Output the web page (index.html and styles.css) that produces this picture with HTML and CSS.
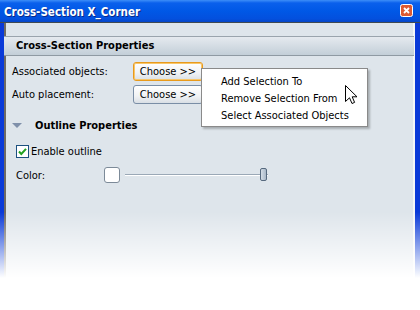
FILE: index.html
```html
<!DOCTYPE html>
<html>
<head>
    <title>Cross-Section X_Corner</title>
    <link rel="stylesheet" href="styles.css">
</head>
<body>
    <div class="window">
        <div class="titlebar">
            <span class="title">Cross-Section X_Corner</span>
            <svg class="close" width="13" height="13" viewBox="0 0 13 13">
                <rect x="0.5" y="0.5" width="12" height="12" rx="2" fill="#dd5a32" stroke="#ffffff"/>
                <path d="M4 4 L9 9 M9 4 L4 9" stroke="#ffffff" stroke-width="1.8"/>
            </svg>
        </div>
        <div class="client">
            <div class="section-head">Cross-Section Properties</div>

            <div class="row first">
                <span class="label">Associated objects:</span>
                <button class="choose focused">Choose &gt;&gt;</button>
            </div>
            <div class="row">
                <span class="label">Auto placement:</span>
                <button class="choose">Choose &gt;&gt;</button>
            </div>

            <!-- Outline group -->
            <div class="group-head">
                <span class="tri"></span>
                <span>Outline Properties</span>
            </div>
            <div class="group">
                <div class="check">
                    <svg width="13" height="13" viewBox="0 0 13 13">
                        <rect x="0.5" y="0.5" width="12" height="12" fill="#ffffff" stroke="#1c5180"/>
                        <path d="M3 6.5 L5.3 9 L10 3.8" fill="none" stroke="#21a121" stroke-width="2"/>
                    </svg>
                    <span>Enable outline</span>
                </div>
                <div class="color-row">
                    <span class="color-label">Color:</span>
                    <span class="swatch"></span>
                    <span class="slider"><span class="thumb"></span></span>
                </div>
            </div>
        </div>

        <div class="menu">
            <div class="item">Add Selection To</div>
            <div class="item">Remove Selection From</div>
            <div class="item">Select Associated Objects</div>
        </div>

        <svg class="cursor" width="13" height="20" viewBox="0 0 13 20">
            <path d="M0.5 0.5 L0.5 16.5 L4.5 12.8 L7 18.5 L9.6 17.4 L7.2 11.8 L12 11.8 Z" fill="#ffffff" stroke="#000000"/>
        </svg>

        <div class="fade"></div>
    </div>
</body>
</html>
```

FILE: styles.css
```css
body {
    margin: 0;
    background: #ffffff;
    font-family: "DejaVu Sans Condensed", "Liberation Sans", sans-serif;
    font-size: 11px;
    color: #000000;
}

.window {
    position: relative;
    width: 420px;
    height: 310px;
    display: flex;
    flex-direction: column;
    overflow: hidden;
}

.titlebar {
    height: 21px;
    display: flex;
    align-items: center;
    justify-content: space-between;
    padding: 0 7px 1px 4px;
    background: linear-gradient(#3d8ef8 0, #0a60ec 3px, #0058e6 50%, #0350de 85%, #0646c8 100%);
    border-bottom: 1px solid #404a52;
}

.title {
    color: #ffffff;
    font-weight: bold;
    font-size: 11.5px;
    padding-top: 2px;
    text-shadow: 1px 1px 0 #0a2a8a;
}

.close {
    display: block;
}

.client {
    flex: 1;
    background: #dee5eb;
    border-left: 4px solid #0a3ad8;
    border-right: 5px solid #0a3ad8;
    box-shadow: inset 2px 0 0 #6e6a64, inset -2px 0 0 #f4f6f8;
    padding-top: 13px;
}

.section-head {
    height: 18px;
    line-height: 18px;
    margin-right: 1px;
    padding-left: 12px;
    font-weight: bold;
    background: linear-gradient(#e5eaef, #c3cfd8);
    border-top: 1px solid #9aa4ad;
    border-bottom: 1px solid #8f9aa3;
}

.row {
    display: flex;
    align-items: center;
    padding-left: 8px;
    margin-top: 4px;
}

.row.first {
    margin-top: 6px;
}

.label {
    width: 121px;
}

.choose {
    width: 70px;
    height: 19px;
    padding: 0;
    font: inherit;
    color: #000000;
    background: linear-gradient(#ffffff, #f0f2f4 60%, #d9dfe5);
    border: 1px solid #7a8ea6;
    border-radius: 3px;
}

.choose.focused {
    border-color: #e89a1c;
    box-shadow: inset 0 0 0 1px #f8c66a;
}

.group-head {
    display: flex;
    align-items: center;
    height: 16px;
    margin-top: 13px;
    padding-left: 8px;
    font-weight: bold;
}

.tri {
    width: 0;
    height: 0;
    border-left: 5px solid transparent;
    border-right: 5px solid transparent;
    border-top: 5px solid #7f90aa;
    margin-right: 13px;
}

.group {
    padding-left: 12px;
    padding-top: 12px;
}

.check {
    display: flex;
    align-items: center;
    gap: 2px;
}

.check svg {
    display: block;
}

.color-row {
    display: flex;
    align-items: center;
    margin-top: 9px;
}

.color-label {
    width: 88px;
}

.swatch {
    width: 14px;
    height: 14px;
    background: #ffffff;
    border: 1px solid #7c8a98;
    border-radius: 3px;
}

.slider {
    position: relative;
    width: 143px;
    height: 1px;
    margin-left: 5px;
    background: #9aa8b6;
    border-bottom: 1px solid #ffffff;
}

.thumb {
    position: absolute;
    left: 135px;
    top: -6px;
    width: 5px;
    height: 11px;
    border: 1px solid #56697e;
    border-radius: 2px;
    background: linear-gradient(90deg, #d4dde6, #a9b8c8);
}

.menu {
    position: absolute;
    left: 201px;
    top: 68px;
    width: 165px;
    padding: 4px 0 2px;
    background: #ffffff;
    border: 1px solid #8a8a8a;
    box-shadow: 2px 2px 2px rgba(0, 0, 0, 0.25);
}

.item {
    height: 17px;
    line-height: 17px;
    padding-left: 19px;
}

.cursor {
    position: absolute;
    left: 345px;
    top: 85px;
}

.fade {
    position: absolute;
    left: 0;
    right: 0;
    top: 212px;
    bottom: 0;
    background: linear-gradient(rgba(255, 255, 255, 0), #ffffff 66px);
}
```
